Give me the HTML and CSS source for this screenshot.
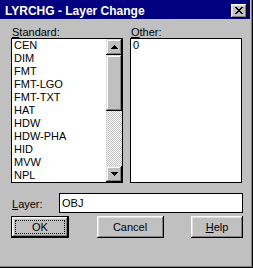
FILE: index.html
```html
<!DOCTYPE html>
<html lang="en">
<head>
  <meta charset="UTF-8">
  <title>LYRCHG - Layer Change</title>
  <link rel="stylesheet" href="styles.css">
</head>
<body>
  <div class="window">
    <div class="titlebar">
      <span class="title">LYRCHG - Layer Change</span>
      <div class="close-btn">
        <svg width="8" height="7" viewBox="0 0 8 7" shape-rendering="crispEdges">
          <path d="M0 0h2v1h-2zM6 0h2v1h-2zM1 1h2v1h-2zM5 1h2v1h-2zM2 2h4v1h-4zM3 3h2v1h-2zM2 4h4v1h-4zM1 5h2v1h-2zM5 5h2v1h-2zM0 6h2v1h-2zM6 6h2v1h-2z" fill="#000"/>
        </svg>
      </div>
    </div>

    <div class="content">
      <div class="lists">
        <div class="col">
          <div class="label"><u>S</u>tandard:</div>
          <div class="listbox">
            <ul class="items">
              <li>CEN</li>
              <li>DIM</li>
              <li>FMT</li>
              <li>FMT-LGO</li>
              <li>FMT-TXT</li>
              <li>HAT</li>
              <li>HDW</li>
              <li>HDW-PHA</li>
              <li>HID</li>
              <li>MVW</li>
              <li>NPL</li>
            </ul>
            <div class="scrollbar">
              <div class="sb-btn">
                <svg width="7" height="4" viewBox="0 0 7 4" shape-rendering="crispEdges">
                  <path d="M3 0h1v1h1v1h1v1h1v1h-7v-1h1v-1h1v-1h1z" fill="#000"/>
                </svg>
              </div>
              <div class="sb-track"><div class="sb-thumb"></div></div>
              <div class="sb-btn">
                <svg width="7" height="4" viewBox="0 0 7 4" shape-rendering="crispEdges">
                  <path d="M0 0h7v1h-1v1h-1v1h-1v1h-1v-1h-1v-1h-1v-1h-1z" fill="#000"/>
                </svg>
              </div>
            </div>
          </div>
        </div>
        <div class="col">
          <div class="label"><u>O</u>ther:</div>
          <div class="listbox">
            <ul class="items">
              <li>0</li>
            </ul>
          </div>
        </div>
      </div>

      <div class="layer-row">
        <span class="label layer-label"><u>L</u>ayer:</span>
        <div class="textbox">OBJ</div>
      </div>

      <div class="buttons">
        <div class="btn btn-ok"><span class="focus">OK</span></div>
        <div class="btn btn-cancel">Cancel</div>
        <div class="btn btn-help"><u>H</u>elp</div>
      </div>
    </div>
  </div>
</body>
</html>
```

FILE: styles.css
```css
* {
  margin: 0;
  padding: 0;
  box-sizing: border-box;
}
body {
  background-color: #c0c0c0;
  font-family: "Liberation Sans", Arial, sans-serif;
  font-size: 11px;
  color: #000;
}
ul {
  list-style: none;
}
u {
  text-decoration: underline;
  text-underline-offset: 1px;
}

.window {
  width: 253px;
  height: 268px;
  background-color: #c0c0c0;
  border-right: 1px solid #000;
  border-bottom: 1px solid #000;
  box-shadow: inset -1px -1px #808080;
}

/* title bar */
.titlebar {
  display: flex;
  align-items: flex-start;
  width: 250px;
  height: 19px;
  background-color: #000080;
  color: #fff;
}
.title {
  font-size: 12px;
  font-weight: bold;
  line-height: 16px;
  padding: 3px 0 0 5px;
}
.close-btn {
  display: flex;
  align-items: center;
  justify-content: center;
  width: 16px;
  height: 14px;
  margin: 4px 3px 0 auto;
  padding: 0 0 1px 0;
  background-color: #c0c0c0;
  box-shadow: inset -1px -1px #000, inset 1px 1px #fff, inset -2px -2px #808080, inset 2px 2px #dfdfdf;
}
.close-btn svg {
  display: block;
}

/* body */
.content {
  padding: 7px 9px 0 11px;
}
.lists {
  display: flex;
  gap: 7px;
}
.col {
  width: 112px;
}
.label {
  height: 12px;
  line-height: 12px;
  padding-left: 1px;
}
.listbox {
  display: flex;
  height: 145px;
  border: 1px solid #000;
  background-color: #fff;
}
.items {
  flex: 1;
  padding-left: 2px;
}
.items li {
  height: 13px;
  line-height: 13px;
  white-space: nowrap;
}

/* scrollbar */
.scrollbar {
  display: flex;
  flex-direction: column;
  width: 16px;
}
.sb-btn {
  display: flex;
  align-items: center;
  justify-content: center;
  height: 16px;
  background-color: #c0c0c0;
  box-shadow: inset -1px -1px #000, inset 1px 1px #dfdfdf, inset -2px -2px #808080, inset 2px 2px #fff;
}
.sb-btn svg {
  display: block;
}
.sb-track {
  flex: 1;
  background: repeating-conic-gradient(#c0c0c0 0 25%, #fff 0 50%) 0 0 / 2px 2px;
}
.sb-thumb {
  height: 56px;
  background-color: #c0c0c0;
  box-shadow: inset -1px -1px #000, inset 1px 1px #dfdfdf, inset -2px -2px #808080, inset 2px 2px #fff;
}

/* layer row */
.layer-row {
  display: flex;
  align-items: flex-start;
  margin-top: 10px;
}
.layer-label {
  width: 48px;
  height: auto;
  padding-top: 5px;
}
.textbox {
  flex: 1;
  height: 20px;
  border: 1px solid #000;
  background-color: #fff;
  padding-left: 2px;
  line-height: 18px;
}

/* buttons */
.buttons {
  display: flex;
  justify-content: space-between;
  margin-top: 3px;
}
.btn {
  display: flex;
  align-items: center;
  justify-content: center;
  height: 22px;
  background-color: #c0c0c0;
  box-shadow: inset -1px -1px #000, inset 1px 1px #fff, inset -2px -2px #808080, inset 2px 2px #dfdfdf;
}
.btn-ok {
  width: 58px;
  padding: 3px;
  border: 1px solid #000;
}
.btn-ok .focus {
  display: flex;
  align-items: center;
  justify-content: center;
  width: 100%;
  height: 100%;
  border: 1px dotted #000;
}
.btn-cancel {
  width: 67px;
}
.btn-help {
  width: 52px;
}
```
